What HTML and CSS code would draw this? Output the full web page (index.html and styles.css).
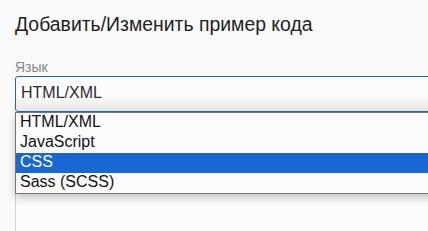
FILE: index.html
```html
<!DOCTYPE html>
<html lang="ru">
<head>
  <meta charset="UTF-8" />
  <meta name="viewport" content="width=device-width, initial-scale=1.0"/>
  <title>Добавить/Изменить пример кода</title>
  <link rel="stylesheet" href="styles.css">
</head>
<body>
  <div class="dialog">
    <h1 class="dialog-title">Добавить/Изменить пример кода</h1>

    <label class="field-label" for="lang">Язык</label>
    <div class="select-wrap">
      <div class="select" id="lang">HTML/XML</div>
      <div class="select-list">
        <div class="option">HTML/XML</div>
        <div class="option">JavaScript</div>
        <div class="option selected">CSS</div>
        <div class="option">Sass (SCSS)</div>
      </div>
    </div>

    <div class="code-area"></div>
  </div>
</body>
</html>
```

FILE: styles.css
```css
html, body {
  margin: 0;
  height: 100%;
  overflow: hidden;
}
body {
  font-family: "Liberation Sans", Arial, sans-serif;
  background-color: #fafafa;
  color: #222;
}
.dialog {
  width: 560px;
  padding: 12px 0 0 15px;
}
.dialog-title {
  margin: 0;
  font-size: 19.4px;
  line-height: 24px;
  font-weight: normal;
  color: #1e1e1e;
}
.field-label {
  display: block;
  margin-top: 23px;
  font-size: 14px;
  line-height: 16px;
  color: #858585;
}
.select-wrap {
  position: relative;
  margin-top: 1px;
}
.select {
  box-sizing: border-box;
  height: 36px;
  padding: 6px 5px 0;
  font-size: 16px;
  line-height: 20px;
  color: #2b2b2b;
  border: 1px solid #1f6c9c;
  border-radius: 3px;
  background: linear-gradient(#fcfcfc 50%, #e6e6e6);
}
.select-list {
  position: absolute;
  top: 100%;
  left: 0;
  right: 0;
  z-index: 2;
  background-color: #fcfcfc;
  border: 1px solid #767676;
  box-shadow: 0 4px 8px rgba(0, 0, 0, 0.22);
}
.option {
  height: 20px;
  padding-left: 4px;
  font-size: 16px;
  line-height: 17px;
  color: #111;
}
.option.selected {
  background-color: #1967d2;
  color: #fff;
}
.code-area {
  margin-top: 12px;
  height: 200px;
  border: 1px solid #d2d2d2;
  background-color: #fcfcfc;
}
```
